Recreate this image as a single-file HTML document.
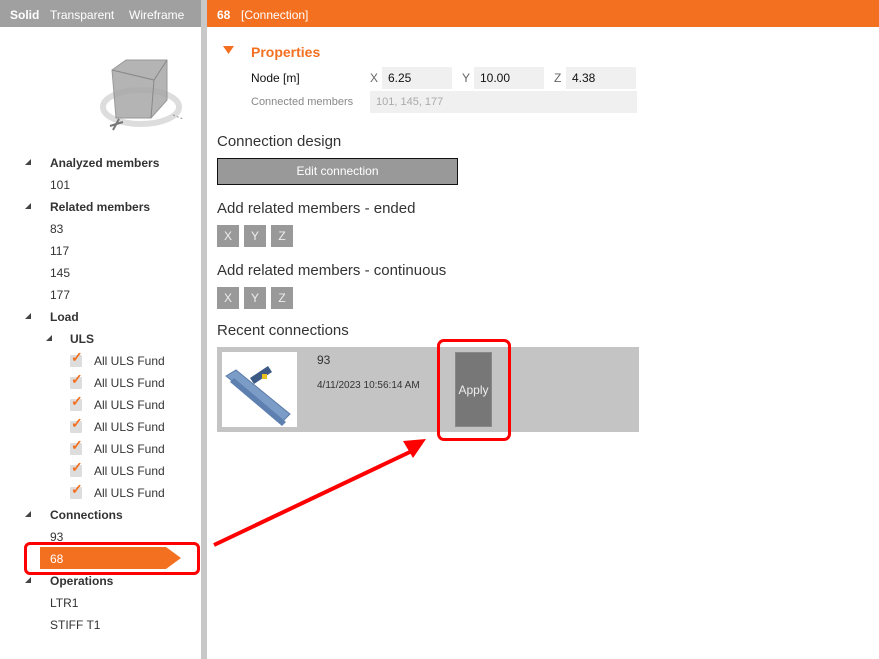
<!DOCTYPE html>
<html><head><style>
*{margin:0;padding:0;box-sizing:border-box}
body{width:879px;height:659px;overflow:hidden;background:#fff;font-family:"Liberation Sans",sans-serif;font-size:12px;color:#333;position:relative}
.a{position:absolute;white-space:nowrap}
.b{font-weight:bold;color:#333}
.tri{position:absolute;width:0;height:0;border-left:6px solid transparent;border-bottom:6px solid #444}
.cb{position:absolute;width:12px;height:12px;background:#ddd;border-radius:1px}
.in{position:absolute;background:#f0f0f0;height:22px;line-height:22px;padding-left:6px;color:#111}
.xb{position:absolute;width:22px;height:22px;background:#999;color:#eee;text-align:center;line-height:22px;font-size:12px}
.h{position:absolute;font-size:15px;color:#333;white-space:nowrap}
.ck{position:absolute;color:#f37021;font-size:14px;font-weight:bold}
</style></head><body>
<div class="a" style="left:0;top:0;width:201px;height:27px;background:#a0a0a0"></div>
<div class="a" style="left:10px;top:8px;color:#fff;font-weight:bold">Solid</div>
<div class="a" style="left:50px;top:8px;color:#fff">Transparent</div>
<div class="a" style="left:129px;top:8px;color:#fff">Wireframe</div>
<div class="a" style="left:201px;top:0;width:6px;height:659px;background:#c8c8c8"></div>
<div class="a" style="left:207px;top:0;width:672px;height:27px;background:#f37021"></div>
<div class="a" style="left:217px;top:8px;color:#fff;font-weight:bold">68</div>
<div class="a" style="left:241px;top:8px;color:#fff">[Connection]</div>

<svg class="a" style="left:95px;top:55px" width="95" height="80">
<ellipse cx="46" cy="52" rx="38" ry="17" fill="none" stroke="#ddd" stroke-width="6"/>
<polygon points="17,15 31,5 72,5 72,45 56,63 21,63" fill="#a8a8a8" stroke="#888" opacity=".85"/>
<polyline points="17,15 59,25 72,5" fill="none" stroke="#888"/>
<line x1="59" y1="25" x2="56" y2="63" stroke="#888"/>
<path d="M18 75 L24 64 M15 71 L28 67" stroke="#777" stroke-width="2"/>
<path d="M78 60 L88 64" stroke="#999" stroke-dasharray="2 2"/>
</svg>

<div class="tri" style="left:25px;top:159px"></div><div class="a b" style="left:50px;top:156px">Analyzed members</div>
<div class="a" style="left:50px;top:178px">101</div>
<div class="tri" style="left:25px;top:203px"></div><div class="a b" style="left:50px;top:200px">Related members</div>
<div class="a" style="left:50px;top:222px">83</div>
<div class="a" style="left:50px;top:244px">117</div>
<div class="a" style="left:50px;top:266px">145</div>
<div class="a" style="left:50px;top:288px">177</div>
<div class="tri" style="left:25px;top:313px"></div><div class="a b" style="left:50px;top:310px">Load</div>
<div class="tri" style="left:46px;top:335px"></div><div class="a b" style="left:70px;top:332px">ULS</div>
<div class="cb" style="left:70px;top:355px"></div><div class="ck" style="left:71px;top:349px">✓</div><div class="a" style="left:94px;top:354px">All ULS Fund</div>
<div class="cb" style="left:70px;top:377px"></div><div class="ck" style="left:71px;top:371px">✓</div><div class="a" style="left:94px;top:376px">All ULS Fund</div>
<div class="cb" style="left:70px;top:399px"></div><div class="ck" style="left:71px;top:393px">✓</div><div class="a" style="left:94px;top:398px">All ULS Fund</div>
<div class="cb" style="left:70px;top:421px"></div><div class="ck" style="left:71px;top:415px">✓</div><div class="a" style="left:94px;top:420px">All ULS Fund</div>
<div class="cb" style="left:70px;top:443px"></div><div class="ck" style="left:71px;top:437px">✓</div><div class="a" style="left:94px;top:442px">All ULS Fund</div>
<div class="cb" style="left:70px;top:465px"></div><div class="ck" style="left:71px;top:459px">✓</div><div class="a" style="left:94px;top:464px">All ULS Fund</div>
<div class="cb" style="left:70px;top:487px"></div><div class="ck" style="left:71px;top:481px">✓</div><div class="a" style="left:94px;top:486px">All ULS Fund</div>
<div class="tri" style="left:25px;top:511px"></div><div class="a b" style="left:50px;top:508px">Connections</div>
<div class="a" style="left:50px;top:530px">93</div>
<svg class="a" style="left:40px;top:547px" width="142" height="22"><polygon points="0,0 126,0 141,11 126,22 0,22" fill="#f37021"/></svg>
<div class="a" style="left:50px;top:552px;color:#fff">68</div>
<div class="a" style="left:24px;top:542px;width:176px;height:33px;border:3px solid #f00;border-radius:6px"></div>
<div class="tri" style="left:25px;top:577px"></div><div class="a b" style="left:50px;top:574px">Operations</div>
<div class="a" style="left:50px;top:596px">LTR1</div>
<div class="a" style="left:50px;top:618px">STIFF T1</div>

<svg class="a" style="left:223px;top:46px" width="12" height="10"><polygon points="0,0 11,0 5.5,8" fill="#f37021"/></svg>
<div class="a" style="left:251px;top:44px;color:#f37021;font-weight:bold;font-size:14px">Properties</div>
<div class="a" style="left:251px;top:71px;color:#111">Node [m]</div>
<div class="a" style="left:370px;top:71px;color:#666">X</div><div class="in" style="left:382px;top:67px;width:70px">6.25</div>
<div class="a" style="left:462px;top:71px;color:#666">Y</div><div class="in" style="left:474px;top:67px;width:70px">10.00</div>
<div class="a" style="left:554px;top:71px;color:#666">Z</div><div class="in" style="left:566px;top:67px;width:70px">4.38</div>
<div class="a" style="left:251px;top:96px;color:#888;font-size:11px">Connected members</div>
<div class="in" style="left:370px;top:91px;width:267px;color:#aaa;font-size:11px">101, 145, 177</div>

<div class="h" style="left:217px;top:133px">Connection design</div>
<div class="a" style="left:217px;top:158px;width:241px;height:27px;background:#999;border:1px solid #111;color:#fff;text-align:center;line-height:25px">Edit connection</div>
<div class="h" style="left:217px;top:200px">Add related members - ended</div>
<div class="xb" style="left:217px;top:225px">X</div><div class="xb" style="left:244px;top:225px">Y</div><div class="xb" style="left:271px;top:225px">Z</div>
<div class="h" style="left:217px;top:262px">Add related members - continuous</div>
<div class="xb" style="left:217px;top:287px">X</div><div class="xb" style="left:244px;top:287px">Y</div><div class="xb" style="left:271px;top:287px">Z</div>
<div class="h" style="left:217px;top:322px">Recent connections</div>

<div class="a" style="left:217px;top:347px;width:422px;height:85px;background:#c4c4c4"></div>
<div class="a" style="left:222px;top:352px;width:75px;height:75px;background:#fff"></div>
<svg class="a" style="left:222px;top:352px" width="75" height="75">
<polygon points="4,24 14,18 68,62 60,70" fill="#7a9cc6" stroke="#5a7aa8"/>
<polygon points="8,30 60,74 64,70 12,26" fill="#5e80b0"/>
<polygon points="28,26 46,14 50,20 32,32" fill="#3c5a85"/>
<rect x="40" y="22" width="5" height="5" fill="#e8c020"/>
</svg>
<div class="a" style="left:317px;top:353px;color:#333">93</div>
<div class="a" style="left:317px;top:380px;color:#333;font-size:10px">4/11/2023 10:56:14 AM</div>
<div class="a" style="left:455px;top:352px;width:37px;height:75px;background:#777;border:1px solid #888;color:#eee;text-align:center;line-height:75px">Apply</div>
<div class="a" style="left:437px;top:339px;width:74px;height:102px;border:3px solid #f00;border-radius:7px"></div>

<svg class="a" style="left:0;top:0" width="879" height="659">
<line x1="214" y1="545" x2="412" y2="451" stroke="#f00" stroke-width="4"/>
<polygon points="426,439 403,441 413,458" fill="#f00"/>
</svg>
</body></html>
